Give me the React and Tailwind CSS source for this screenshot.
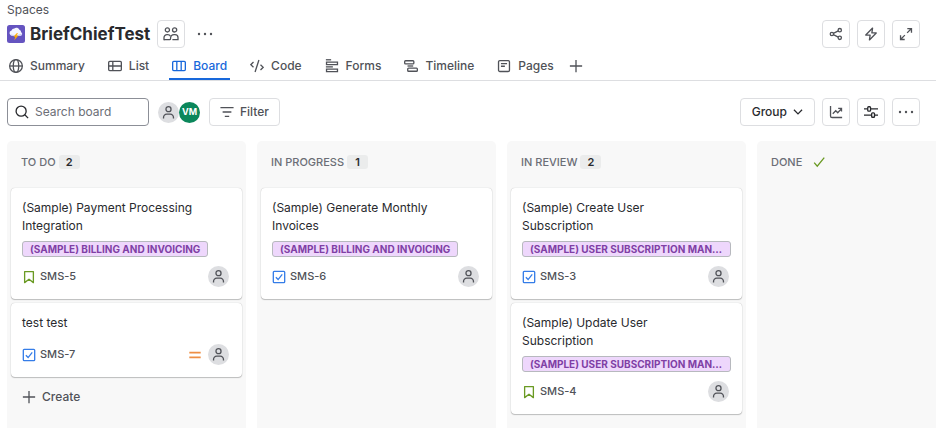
function Svg({ size = 14, className = '', children, ...rest }) {
  return (
    <svg
      width={size}
      height={size}
      viewBox="0 0 16 16"
      fill="none"
      stroke="currentColor"
      strokeWidth="1.5"
      className={`shrink-0 ${className}`}
      aria-hidden="true"
      {...rest}
    >
      {children}
    </svg>
  );
}

const GlobeIcon = () => (
  <Svg>
    <circle cx="8" cy="8" r="7.25" />
    <ellipse cx="8" cy="8" rx="3.1" ry="7.25" />
    <path d="M.75 8h14.5" />
  </Svg>
);

const ListIcon = () => (
  <Svg>
    <rect x=".75" y="2.75" width="14.5" height="10.5" rx="1.25" />
    <path d="M.75 8h14.5M5.5 2.75v10.5" />
  </Svg>
);

const BoardIcon = () => (
  <Svg>
    <rect x=".75" y="2.75" width="14.5" height="10.5" rx="1.25" />
    <path d="M5.5 2.75v10.5M10.5 2.75v10.5" />
  </Svg>
);

const CodeIcon = () => (
  <Svg>
    <path d="M4 3.5.9 6.5 4 9.5M12 6.5l3.1 3-3.1 3M10.2 1.2 5.8 14.8" />
  </Svg>
);

const FormsIcon = () => (
  <Svg>
    <path d="M1 .9h6" />
    <path d="M1.75 3.5h12.5v3H1.75z" />
    <path d="M1 9h8" />
    <path d="M1.75 11.5h12.5v3H1.75z" />
  </Svg>
);

const TimelineIcon = () => (
  <Svg>
    <rect x=".75" y="2" width="10.5" height="3.5" rx="1" />
    <path d="M4 8h6.5" />
    <rect x="4.25" y="10.5" width="11" height="3.5" rx="1" />
  </Svg>
);

const PagesIcon = () => (
  <Svg>
    <rect x="1.75" y="1.75" width="12.5" height="12.5" rx="1.5" />
    <path d="M4.5 5.25h7M4.5 8.25h4.5" />
  </Svg>
);

const PlusIcon = ({ className }) => (
  <Svg className={className}>
    <path d="M8 1v14M1 8h14" />
  </Svg>
);

const TeamIcon = () => (
  <Svg size={16} strokeWidth="1.3">
    <circle cx="4.4" cy="3.9" r="2.1" />
    <circle cx="11.6" cy="3.9" r="2.1" />
    <path d="M1 14.2v-2.6a3 3 0 0 1 3-3h.8a3 3 0 0 1 2.6 1.5" />
    <path d="M1 13.6h5.6c.6 0 .9-.3.9-.9 0-2.500 1.500-4.100 3.700-4.100h.8a3 3 0 0 1 3 3v2H9.400" />
  </Svg>
);

const MoreIcon = () => (
  <Svg size={16} stroke="none" fill="currentColor">
    <circle cx="2" cy="8" r="1.200" />
    <circle cx="8" cy="8" r="1.200" />
    <circle cx="14" cy="8" r="1.200" />
  </Svg>
);

const ShareIcon = () => (
  <Svg>
    <circle cx="3.300" cy="8" r="1.900" />
    <circle cx="12.300" cy="3.600" r="1.900" />
    <circle cx="12.300" cy="12.400" r="1.900" />
    <path d="M5 7.200 10.600 4.400M5 8.800l5.600 2.800" />
  </Svg>
);

const BoltIcon = () => (
  <Svg>
    <path d="M9.800 1.200 2 9.200h5l-.8 5.600L14 6.800H9z" strokeLinejoin="round" />
  </Svg>
);

const ExpandIcon = () => (
  <Svg>
    <path d="M9.500 1.750h4.750V6.500M14.250 1.750 9.300 6.700M6.500 14.250H1.750V9.500M1.750 14.250 6.700 9.300" />
  </Svg>
);

const SearchIcon = () => (
  <Svg>
    <circle cx="7" cy="7" r="5.750" />
    <path d="m11.200 11.200 3.800 3.800" />
  </Svg>
);

const FilterIcon = () => (
  <Svg>
    <path d="M.5 3h15M3 8h10M5.500 13h5" />
  </Svg>
);

const ChevronIcon = () => (
  <Svg size={10} strokeWidth="2">
    <path d="m1.500 4.500 6.500 6.500 6.500-6.500" />
  </Svg>
);

const ChartIcon = () => (
  <Svg>
    <path d="M1.750 1v11.500c0 1 .7 1.750 1.750 1.750H15" />
    <path d="m4.300 10 3.400-3.400 2.300 2.300 4-4.500M10.500 3.750h3.800V7.500" />
  </Svg>
);

const SettingsIcon = () => (
  <Svg className="text-[#292a2e]">
    <path d="M0 4.500h4M7.500 4.500H16M0 11.500h8.500M12 11.500h4" />
    <rect x="4.250" y="2" width="3.250" height="5" rx="1" />
    <rect x="8.750" y="9" width="3.250" height="5" rx="1" />
  </Svg>
);

const StoryIcon = () => (
  <Svg className="text-[#6a9a23]">
    <path d="M3 1.750h10v12.700L8 10.600l-5 3.850z" strokeLinejoin="round" />
  </Svg>
);

const TaskIcon = () => (
  <Svg className="text-[#357de8]">
    <rect x="1.500" y="1.500" width="13" height="13" rx="1" />
    <path d="m4.400 8.200 2.600 2.700 4.700-6" />
  </Svg>
);

const MediumPriorityIcon = () => (
  <Svg className="text-[#ee8f45]" strokeWidth="2">
    <path d="M1.500 5.400h13M1.500 10.600h13" />
  </Svg>
);

const DoneIcon = () => (
  <Svg className="text-[#6a9a23]">
    <path d="m2.500 8.700 3.500 4 8-9.700" />
  </Svg>
);

const SpaceLogo = () => (
  <svg width="18" height="18" viewBox="0 0 18 18" className="shrink-0" aria-hidden="true">
    <rect width="18" height="18" rx="2.500" fill="#6554c0" />
    <path
      d="M5 10.800a2.700 2.700 0 0 1-.5-5.300A3 3 0 0 1 7.300 3.400a3.300 3.300 0 0 1 5.100 1.300 2.300 2.300 0 0 1 1.700 2.500 1.900 1.900 0 0 1-.6 3.600z"
      fill="#f4f5ff"
    />
    <path d="M5 10.800a2.700 2.700 0 0 1-1.800-1.500c3 1 7.500.9 11.600-.9a1.900 1.900 0 0 1-1.300 2.400z" fill="#c9cdf2" />
    <path d="M9.700 8.200 6.400 11.700h1.900l-1 3.500 4.100-4.600H9.300l1.900-2.400z" fill="#ffab00" />
  </svg>
);

function PersonAvatar({ label = 'Unassigned' }) {
  return (
    <span
      role="img"
      aria-label={label}
      className="flex size-[21px] shrink-0 items-center justify-center rounded-full bg-[#dddee1] text-[#505258]"
    >
      <Svg size={15} strokeWidth="1.400">
        <circle cx="8" cy="4.400" r="2.700" />
        <path d="M2.700 14.500v-1.300a3.400 3.400 0 0 1 3.400-3.400h3.800a3.400 3.400 0 0 1 3.400 3.400v1.300" />
      </Svg>
    </span>
  );
}

function IconButton({ label, children }) {
  return (
    <button
      type="button"
      aria-label={label}
      className="flex size-7 shrink-0 items-center justify-center rounded border border-[#dddee1] bg-white text-[#505258]"
    >
      {children}
    </button>
  );
}

const tabs = [
  { label: 'Summary', Icon: GlobeIcon },
  { label: 'List', Icon: ListIcon },
  { label: 'Board', Icon: BoardIcon, active: true },
  { label: 'Code', Icon: CodeIcon },
  { label: 'Forms', Icon: FormsIcon },
  { label: 'Timeline', Icon: TimelineIcon },
  { label: 'Pages', Icon: PagesIcon },
];

const columns = [
  {
    name: 'TO DO',
    count: 2,
    create: true,
    cards: [
      {
        title: '(Sample) Payment Processing Integration',
        epic: '(SAMPLE) BILLING AND INVOICING',
        id: 'SMS-5',
        type: 'story',
      },
      { title: 'test test', id: 'SMS-7', type: 'task', priority: true },
    ],
  },
  {
    name: 'IN PROGRESS',
    count: 1,
    cards: [
      {
        title: '(Sample) Generate Monthly Invoices',
        epic: '(SAMPLE) BILLING AND INVOICING',
        id: 'SMS-6',
        type: 'task',
      },
    ],
  },
  {
    name: 'IN REVIEW',
    count: 2,
    cards: [
      {
        title: '(Sample) Create User Subscription',
        epic: '(SAMPLE) USER SUBSCRIPTION MANAGEMENT',
        id: 'SMS-3',
        type: 'task',
      },
      {
        title: '(Sample) Update User Subscription',
        epic: '(SAMPLE) USER SUBSCRIPTION MANAGEMENT',
        id: 'SMS-4',
        type: 'story',
      },
    ],
  },
  { name: 'DONE', done: true, cards: [] },
];

function Card({ card }) {
  return (
    <article className="rounded bg-white px-[11px] pt-[11px] pb-3 shadow-[0_1px_1px_rgba(30,31,33,0.25),0_0_1px_rgba(30,31,33,0.31)]">
      <h3 className="pr-8 text-[12px] leading-[18px] text-[#292a2e]">{card.title}</h3>
      {card.epic && (
        <div className="mt-[6px] flex">
          <span className="h-4 truncate rounded-[3px] border border-[#b7b9be] bg-[#eed7fc] px-[7px] text-[10px] leading-[14px] font-bold text-[#803fa5]">
            {card.epic}
          </span>
        </div>
      )}
      <div className={`flex items-center ${card.epic ? 'mt-[9px]' : 'mt-3'}`}>
        {card.type === 'story' ? <StoryIcon /> : <TaskIcon />}
        <a href={`#${card.id}`} className="ml-1 text-[11px] font-medium text-[#505258]">
          {card.id}
        </a>
        <div className="ml-auto flex items-center gap-[6px] pr-[2px]">
          {card.priority && <MediumPriorityIcon />}
          <PersonAvatar />
        </div>
      </div>
    </article>
  );
}

function Column({ column }) {
  return (
    <section className="flex w-[239px] shrink-0 flex-col rounded-t-[5px] bg-[#f8f8f8] px-1">
      <header className="flex h-[47px] items-center px-[10px] pb-[5px]">
        <h2 className="text-[11px] font-medium text-[#6b6e76]">{column.name}</h2>
        {column.done ? (
          <span className="ml-[10px] flex">
            <DoneIcon />
          </span>
        ) : (
          <span className="ml-[3px] flex h-[14px] w-[21px] items-center justify-center rounded-[3px] bg-[#ebecec] text-[11px] font-semibold text-[#292a2e]">
            {column.count}
          </span>
        )}
      </header>
      <div className="flex flex-col gap-1">
        {column.cards.map((card) => (
          <Card key={card.id} card={card} />
        ))}
      </div>
      {column.create && (
        <button
          type="button"
          className="mt-2 flex h-6 items-center gap-[6px] px-[11px] text-[12px] font-medium text-[#505258]"
        >
          <PlusIcon />
          Create
        </button>
      )}
    </section>
  );
}

export default function App() {
  return (
    <div className="flex min-h-screen flex-col overflow-x-hidden bg-white font-['Inter','Liberation_Sans',sans-serif] text-[#292a2e]">
      <header>
        <div className="pr-4 pl-[7px]">
          <a href="#spaces" className="block h-5 text-[12px] leading-5 text-[#505258]">
            Spaces
          </a>
          <div className="flex h-7 items-center">
            <SpaceLogo />
            <h1 className="mr-[7px] ml-[5px] text-[17px] leading-6 font-bold">BriefChiefTest</h1>
            <IconButton label="Team">
              <TeamIcon />
            </IconButton>
            <button
              type="button"
              aria-label="More actions"
              className="ml-[6px] flex size-7 items-center justify-center text-[#505258]"
            >
              <MoreIcon />
            </button>
            <div className="ml-auto flex gap-[7px]">
              <IconButton label="Share">
                <ShareIcon />
              </IconButton>
              <IconButton label="Automation">
                <BoltIcon />
              </IconButton>
              <IconButton label="Full screen">
                <ExpandIcon />
              </IconButton>
            </div>
          </div>
        </div>
        <nav className="mt-1 flex items-stretch border-b border-[#dddee1] pl-[6px]">
          <div className="flex gap-[17px]">
            {tabs.map(({ label, Icon, active }) => (
              <a
                key={label}
                href={`#${label}`}
                aria-current={active ? 'page' : undefined}
                className={`flex h-7 items-center gap-[7px] px-[3px] text-[12px] font-medium ${
                  active ? 'text-[#1868db] shadow-[inset_0_-2px_0_#1868db]' : 'text-[#505258]'
                }`}
              >
                <Icon />
                {label}
              </a>
            ))}
          </div>
          <button type="button" aria-label="Add tab" className="ml-3 flex h-7 items-center text-[#505258]">
            <PlusIcon />
          </button>
        </nav>
      </header>

      <div className="flex items-center pt-[17px] pr-4 pb-[15px] pl-[7px]">
        <label className="flex h-7 w-[142px] items-center gap-[6px] rounded border border-[#8c8f97] px-[7px] text-[#292a2e]">
          <SearchIcon />
          <input
            type="search"
            aria-label="Search board"
            placeholder="Search board"
            className="w-full min-w-0 bg-transparent text-[12px] outline-none placeholder:text-[#6b6e76]"
          />
        </label>
        <div className="ml-[9px] flex">
          <PersonAvatar label="Filter by unassigned" />
          <span className="flex size-[21px] items-center justify-center rounded-full bg-[#0b875b] text-[9px] font-bold text-white">
            VM
          </span>
        </div>
        <button
          type="button"
          className="ml-[9px] flex h-7 items-center gap-[6px] rounded border border-[#dddee1] px-[10px] text-[12px] font-medium text-[#505258]"
        >
          <FilterIcon />
          Filter
        </button>
        <div className="ml-auto flex gap-[7px]">
          <button
            type="button"
            className="flex h-7 items-center gap-[6px] rounded border border-[#dddee1] px-[11px] text-[12px] font-medium text-[#292a2e]"
          >
            Group
            <ChevronIcon />
          </button>
          <IconButton label="Insights">
            <ChartIcon />
          </IconButton>
          <IconButton label="View settings">
            <SettingsIcon />
          </IconButton>
          <IconButton label="More">
            <MoreIcon />
          </IconButton>
        </div>
      </div>

      <main className="flex grow gap-[11px] overflow-hidden pl-[7px]">
        {columns.map((column) => (
          <Column key={column.name} column={column} />
        ))}
      </main>
    </div>
  );
}
